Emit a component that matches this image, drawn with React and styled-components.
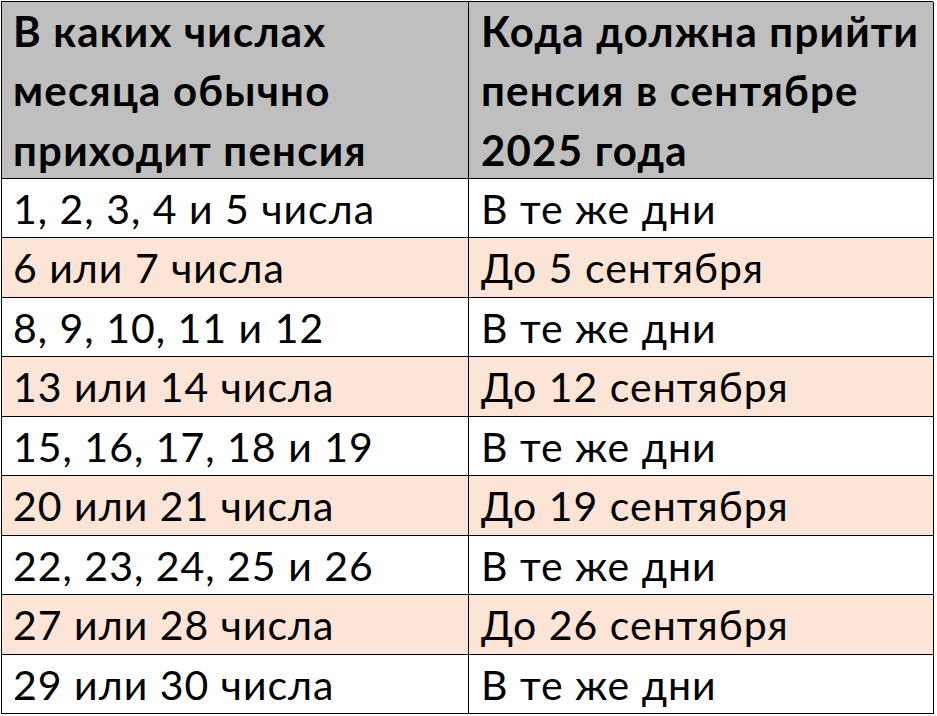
import React from "react";
import styled, { createGlobalStyle } from "styled-components";

const Global = createGlobalStyle`
  html, body { margin: 0; padding: 0; background: #ffffff; }
  body { font-family: "Lato", "Noto Sans", sans-serif; color: #000; }
`;

const Table = styled.div`
  display: grid;
  grid-template-columns: 467px 465px;
  grid-template-rows: 177px repeat(9, 59.45px);
  margin: 1px 0 0 1px;
  width: 932px;
  border-left: 1px solid #000;
  border-top: 1px solid #000;
  box-sizing: border-box;
`;

const Cell = styled.div`
  box-sizing: border-box;
  border-right: 1px solid #000;
  border-bottom: 1px solid #000;
  background: ${(p) => (p.$shade ? "#fce4d6" : "#ffffff")};
  padding: 1px 0 0 ${(p) => (p.$right ? "12px" : "11px")};
  font-size: 41px;
  letter-spacing: 1px;
  line-height: 58px;
  white-space: nowrap;
  overflow: hidden;
`;

const HeadCell = styled(Cell)`
  background: #bfbfbf;
  font-weight: 700;
  font-size: 42px;
  letter-spacing: 1.2px;
  line-height: 59.4px;
  padding-top: 0;
`;

const rows = [
  ["1, 2, 3, 4 и 5 числа", "В те же дни"],
  ["6 или 7 числа", "До 5 сентября"],
  ["8, 9, 10, 11 и 12", "В те же дни"],
  ["13 или 14 числа", "До 12 сентября"],
  ["15, 16, 17, 18 и 19", "В те же дни"],
  ["20 или 21 числа", "До 19 сентября"],
  ["22, 23, 24, 25 и 26", "В те же дни"],
  ["27 или 28 числа", "До 26 сентября"],
  ["29 или 30 числа", "В те же дни"],
];

export default function App() {
  return (
    <>
      <Global />
      <Table>
        <HeadCell>
          В каких числах
          <br />
          месяца обычно
          <br />
          приходит пенсия
        </HeadCell>
        <HeadCell $right>
          Кода должна прийти
          <br />
          пенсия в сентябре
          <br />
          2025 года
        </HeadCell>
        {rows.map(([a, b], i) => (
          <React.Fragment key={i}>
            <Cell $shade={i % 2 === 1}>{a}</Cell>
            <Cell $shade={i % 2 === 1} $right>
              {b}
            </Cell>
          </React.Fragment>
        ))}
      </Table>
    </>
  );
}
